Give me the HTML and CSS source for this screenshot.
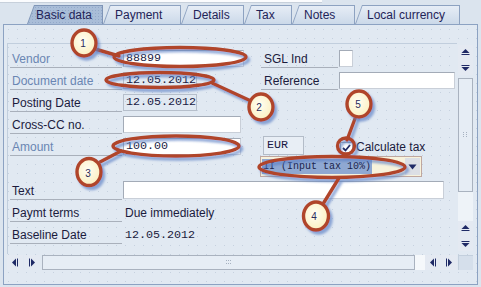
FILE: index.html
```html
<!DOCTYPE html>
<html>
<head>
<meta charset="utf-8">
<title>Basic data</title>
<link rel="stylesheet" href="styles.css">
</head>
<body>
<div class="screen">
  <div class="topstrip"></div>
  <div class="tabs">
    <div class="tab active w76"><div class="tab-in first">Basic data</div></div>
    <div class="tab w78"><div class="tab-in">Payment</div></div>
    <div class="tab w63"><div class="tab-in">Details</div></div>
    <div class="tab w48"><div class="tab-in">Tax</div></div>
    <div class="tab w63"><div class="tab-in">Notes</div></div>
    <div class="tab w105"><div class="tab-in">Local currency</div></div>
  </div>
  <div class="panel">
    <div class="frame">
      <div class="main">
        <div class="row">
          <div class="lbl req">Vendor</div>
          <div class="val"><div class="inp white mono w121">88899</div></div>
          <div class="lbl2">SGL Ind</div>
          <div class="inp white w14"></div>
        </div>
        <div class="row">
          <div class="lbl req">Document date</div>
          <div class="val"><div class="inp mono w74">12.05.2012</div></div>
          <div class="lbl2">Reference</div>
          <div class="inp white w116"></div>
        </div>
        <div class="row">
          <div class="lbl">Posting Date</div>
          <div class="val"><div class="inp mono w74">12.05.2012</div></div>
        </div>
        <div class="row">
          <div class="lbl">Cross-CC no.</div>
          <div class="val"><div class="inp white w118"></div></div>
        </div>
        <div class="row">
          <div class="lbl req">Amount</div>
          <div class="val"><div class="inp white mono w118">100.00</div></div>
          <div class="right">
            <div class="cur mono">EUR</div>
            <div class="chk"><svg width="11" height="10" viewBox="0 0 11 10"><path d="M2 5 L4.5 7.5 L9 2" fill="none" stroke="#1f2a66" stroke-width="1.8"/></svg></div>
            <div class="chklbl">Calculate tax</div>
          </div>
        </div>
        <div class="row">
          <div class="lbl blank"></div>
          <div class="val"></div>
          <div class="right">
            <div class="dd">
              <span class="ddsel mono">1I (Input tax 10%)</span>
              <span class="ddbtn"><svg width="9" height="6" viewBox="0 0 9 6"><path d="M0.5 0.5 H8.5 L4.5 5.5 Z" fill="#1f2a66"/></svg></span>
            </div>
          </div>
        </div>
        <div class="row">
          <div class="lbl">Text</div>
          <div class="val"><div class="inp white w321 tall"></div></div>
        </div>
        <div class="row">
          <div class="lbl">Paymt terms</div>
          <div class="val"><div class="txt">Due immediately</div></div>
        </div>
        <div class="row">
          <div class="lbl">Baseline Date</div>
          <div class="val"><div class="txt mono">12.05.2012</div></div>
        </div>
      </div>
      <div class="vscroll">
        <div class="sbtn"><svg width="15" height="15" viewBox="0 0 15 15"><path d="M3.5 8 L7.5 4 L11.5 8 Z M3.5 9 H11.5 V10 H3.5 Z" fill="#1f2a66"/></svg></div>
        <div class="sbtn"><svg width="15" height="15" viewBox="0 0 15 15"><path d="M3.5 5 H11.5 V6 H3.5 Z M3.5 7 H11.5 L7.5 11 Z" fill="#1f2a66"/></svg></div>
        <div class="vtrack"><svg width="7" height="8" viewBox="0 0 7 8"><path d="M1 1h1v1H1zM4 1h1v1H4zM1 3h1v1H1zM4 3h1v1H4zM1 5h1v1H1zM4 5h1v1H4z" fill="#a6b1c0"/></svg></div>
        <div class="vgap"></div>
        <div class="sbtn"><svg width="15" height="15" viewBox="0 0 15 15"><path d="M3.5 8 L7.5 4 L11.5 8 Z M3.5 9 H11.5 V10 H3.5 Z" fill="#1f2a66"/></svg></div>
        <div class="sbtn"><svg width="15" height="15" viewBox="0 0 15 15"><path d="M3.5 5 H11.5 V6 H3.5 Z M3.5 7 H11.5 L7.5 11 Z" fill="#1f2a66"/></svg></div>
      </div>
      <div class="hscroll">
        <div class="sbtn h"><svg width="16" height="15" viewBox="0 0 16 15"><path d="M9 3.5 L5 7.5 L9 11.5 Z M10 3.5 H11 V11.5 H10 Z" fill="#1f2a66"/></svg></div>
        <div class="sbtn h second"><svg width="16" height="15" viewBox="0 0 16 15"><path d="M5 3.5 H6 V11.5 H5 Z M7 3.5 L11 7.5 L7 11.5 Z" fill="#1f2a66"/></svg></div>
        <div class="htrack"><svg width="8" height="7" viewBox="0 0 8 7"><path d="M1 1h1v1H1zM3 1h1v1H3zM5 1h1v1H5zM1 4h1v1H1zM3 4h1v1H3zM5 4h1v1H5z" fill="#a6b1c0"/></svg></div>
        <div class="hgap"></div>
        <div class="sbtn h"><svg width="16" height="15" viewBox="0 0 16 15"><path d="M9 3.5 L5 7.5 L9 11.5 Z M10 3.5 H11 V11.5 H10 Z" fill="#1f2a66"/></svg></div>
        <div class="sbtn h"><svg width="16" height="15" viewBox="0 0 16 15"><path d="M5 3.5 H6 V11.5 H5 Z M7 3.5 L11 7.5 L7 11.5 Z" fill="#1f2a66"/></svg></div>
      </div>
      <div class="corner"></div>
    </div>
  </div>

  <svg class="notes" width="481" height="287" viewBox="0 0 481 287">
    <defs>
      <filter id="sh" x="-20%" y="-40%" width="140%" height="180%">
        <feDropShadow dx="2.5" dy="3" stdDeviation="1.2" flood-color="#5a7ec4" flood-opacity="0.65"/>
      </filter>
      <radialGradient id="cream" cx="45%" cy="42%" r="62%">
        <stop offset="0" stop-color="#fffef4"/>
        <stop offset="1" stop-color="#fbefbd"/>
      </radialGradient>
    </defs>
    <g filter="url(#sh)" stroke="#b0452b" stroke-width="3.4" fill="none" stroke-linecap="round">
      <line x1="95" y1="49" x2="119" y2="56"/>
      <line x1="212" y1="83" x2="251" y2="101"/>
      <line x1="100" y1="162" x2="121" y2="151"/>
      <line x1="356" y1="116" x2="347" y2="140"/>
      <line x1="339" y1="178" x2="323" y2="204"/>
      <ellipse cx="180" cy="57" rx="66" ry="9.5"/>
      <ellipse cx="160" cy="80" rx="54" ry="7.5"/>
      <ellipse cx="176" cy="146" rx="63" ry="10"/>
      <ellipse cx="332" cy="167" rx="73" ry="10.5"/>
      <ellipse cx="346" cy="146" rx="8.5" ry="8"/>
    </g>
    <g filter="url(#sh)" stroke="#b0452b" stroke-width="3.4" fill="url(#cream)">
      <ellipse cx="84" cy="43" rx="12" ry="13"/>
      <ellipse cx="261" cy="107" rx="12" ry="13"/>
      <ellipse cx="89" cy="172" rx="12" ry="13.5"/>
      <ellipse cx="316" cy="216" rx="12.5" ry="14"/>
      <ellipse cx="359" cy="104" rx="12" ry="13"/>
    </g>
    <g class="num">
      <text x="83" y="47">1</text>
      <text x="259" y="111">2</text>
      <text x="88" y="177">3</text>
      <text x="314" y="220">4</text>
      <text x="358" y="108">5</text>
    </g>
  </svg>
</div>
</body>
</html>
```

FILE: styles.css
```css
* { box-sizing: border-box; }
html, body { margin: 0; padding: 0; }
body {
  width: 481px;
  height: 287px;
  overflow: hidden;
  background: #dbe4ee;
  font-family: "Liberation Sans", Arial, sans-serif;
  font-size: 12px;
  color: #1b1b3d;
}
.screen { position: relative; width: 481px; height: 287px; }

.topstrip {
  width: 322px;
  height: 3px;
  background: #fbfcfe;
  border-bottom: 1px solid #c7d0db;
}

/* tabs */
.tabs {
  display: flex;
  height: 19px;
  margin-top: 2px;
  padding-left: 27px;
}
.tab {
  flex: none;
  height: 19px;
  padding: 1px 1px 0 1px;
  background: #8da2c1;
  clip-path: polygon(0 100%, 7px 0, 100% 0, 100% 100%);
}
.tab-in {
  height: 18px;
  padding: 2px 0 0 11px;
  line-height: 15px;
  color: #1f2458;
  background: linear-gradient(#e6edf6, #cbd9e9);
  clip-path: polygon(0 100%, 6.5px 0, 100% 0, 100% 100%);
  white-space: nowrap;
}
.tab-in.first { padding-left: 8px; }
.tab.active { background: #7f95b7; }
.tab.active .tab-in {
  background-color: #a9bdd8;
  background-image: radial-gradient(circle, #93a9c9 0.6px, transparent 0.9px);
  background-size: 3px 3px;
}
.w76 { width: 76px; }
.w78 { width: 78px; }
.w63 { width: 63px; }
.w48 { width: 48px; }
.w105 { width: 105px; }

/* panel */
.panel {
  margin: 0 3px 0 3px;
  height: 261px;
  border: 1px solid #8ca2c2;
  padding: 18px 4px 0 3px;
  background-color: #e1e9f2;
  background-image: radial-gradient(circle, #c6d1df 0.6px, transparent 0.9px);
  background-size: 9px 9px;
}
.frame {
  display: grid;
  grid-template-columns: 450px 15px;
  grid-template-rows: 211px 15px;
  gap: 1px;
}
.main {
  border-left: 1px solid #c1cedd;
  border-top: 1px solid #c1cedd;
  padding: 2px 0 0 2px;
}

/* rows */
.row {
  display: flex;
  align-items: flex-end;
  height: 22px;
}
.lbl {
  flex: none;
  width: 112px;
  height: 22px;
  border-bottom: 1px solid #a9b0bb;
  padding: 0 0 1px 2px;
  line-height: 14px;
  display: flex;
  align-items: flex-end;
  white-space: nowrap;
}
.lbl.req { color: #6a86b3; }
.lbl.blank { border-bottom-color: transparent; }
.val {
  flex: none;
  width: 138px;
  height: 22px;
  margin-left: 1px;
  display: flex;
  align-items: flex-end;
}
.lbl2 {
  flex: none;
  width: 77px;
  height: 22px;
  border-bottom: 1px solid #a9b0bb;
  padding: 0 0 1px 3px;
  line-height: 14px;
  display: flex;
  align-items: flex-end;
  margin-right: 1px;
}
.inp {
  flex: none;
  height: 17px;
  margin-bottom: 1px;
  border: 1px solid #b6bfcb;
  padding-left: 2px;
  line-height: 15px;
  color: #1a1a44;
  white-space: nowrap;
}
.inp.white {
  background: #ffffff;
  border-color: #a3abb7 #c9cfd8 #c9cfd8 #a3abb7;
}
.inp.tall { height: 18px; }
.mono {
  font-family: "Liberation Mono", "Courier New", monospace;
  font-size: 11.7px;
  color: #1a1a44;
}
.w121 { width: 121px; }
.w74 { width: 74px; }
.w118 { width: 118px; }
.w116 { width: 116px; }
.w14 { width: 14px; }
.w321 { width: 321px; }

.txt {
  padding: 0 0 2px 2px;
  line-height: 14px;
  white-space: nowrap;
  color: #1b1b3d;
}

.right {
  display: flex;
  align-items: flex-end;
  height: 22px;
}
.cur {
  width: 41px;
  height: 19px;
  margin: 0 0 1px 2px;
  border: 1px solid #b3bcc8;
  background: #e8eef5;
  padding-left: 3px;
  line-height: 17px;
}
.chk {
  width: 13px;
  height: 12px;
  margin: 0 0 2px 36px;
  background: #ffffff;
  border: 1px solid #9ea7b4;
  display: flex;
  align-items: center;
  justify-content: center;
}
.chklbl {
  margin-left: 3px;
  padding-bottom: 2px;
  line-height: 14px;
  white-space: nowrap;
}
.dd {
  display: flex;
  align-items: center;
  width: 162px;
  height: 21px;
  margin: 0 0 1px -1px;
  padding: 1px;
  border: 1px solid #bfa79f;
  background: #f7f2dc;
}
.ddsel {
  height: 15px;
  line-height: 15px;
  padding: 0 1px;
  font-size: 10px;
  background: #8fa8d2;
  color: #1a1f4a;
  white-space: nowrap;
}
.ddbtn {
  margin-left: auto;
  width: 15px;
  height: 17px;
  background: #dcdfe5;
  display: flex;
  align-items: center;
  justify-content: center;
}

/* scrollbars */
.vscroll {
  display: flex;
  flex-direction: column;
  padding-top: 2px;
}
.sbtn {
  flex: none;
  width: 15px;
  height: 15px;
  background-color: #f2f5fa;
  background-image: radial-gradient(circle, #dde4ee 0.6px, transparent 0.9px);
  background-size: 2px 2px;
  display: flex;
  align-items: center;
  justify-content: center;
}
.sbtn.h { width: 16px; }
.sbtn.second { margin-left: 1px; }
.vtrack {
  margin-top: 3px;
  height: 114px;
  border: 1px solid #a9b2bf;
  background: #e6edf5;
  display: flex;
  align-items: center;
  justify-content: center;
}
.vgap {
  height: 29px;
  background: #eef3f8;
}
.hscroll {
  display: flex;
}
.htrack {
  margin-left: 2px;
  width: 373px;
  height: 15px;
  border: 1px solid #a9b2bf;
  background: #e6edf5;
  display: flex;
  align-items: center;
  justify-content: center;
}
.hgap {
  width: 10px;
  height: 15px;
  background: #f5f8fb;
}
.corner {
  background: #d5dfeb;
  border-left: 1px solid #c3cfdd;
  border-top: 1px solid #c3cfdd;
}

/* annotations */
.notes {
  position: absolute;
  left: 0;
  top: 0;
  pointer-events: none;
}
.num text {
  font-family: "Liberation Sans", Arial, sans-serif;
  font-size: 10px;
  fill: #2a2c5a;
  text-anchor: middle;
}
```
